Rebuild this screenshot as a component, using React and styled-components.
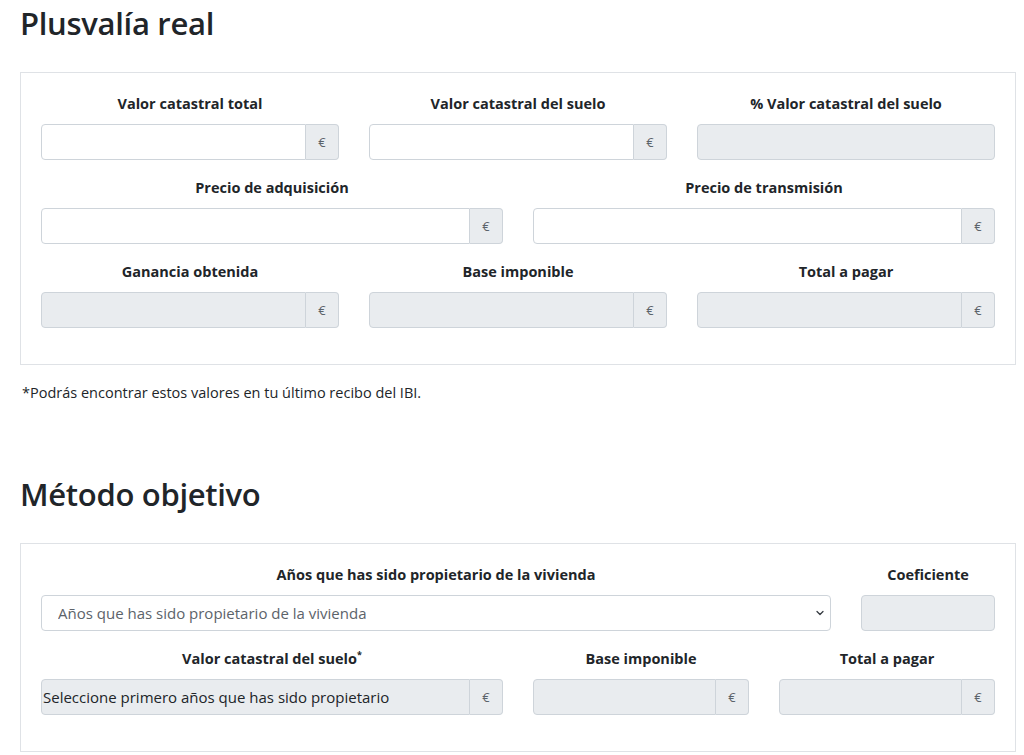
import React from "react";
import styled, { createGlobalStyle } from "styled-components";

const GlobalStyle = createGlobalStyle`
  body {
    margin: 0;
    background: #fff;
    color: #212529;
    font-family: "Open Sans", "Noto Sans", "Liberation Sans", sans-serif;
  }
`;

const Page = styled.div`
  padding: 4px 8px 0 20px;
`;

const Title = styled.h2`
  margin: 0 0 30px 0;
  font-size: 31px;
  line-height: 38px;
  font-weight: 600;
  letter-spacing: -0.3px;
  color: #212529;
  margin-top: ${(p) => p.$top || 0}px;
`;

const Card = styled.div`
  border: 1px solid #dfe2e6;
  padding: 19px 20px 20px;
`;

const Row = styled.div`
  display: grid;
  grid-template-columns: repeat(12, 1fr);
  column-gap: 30px;
  margin-bottom: 16px;
`;

const Field = styled.div`
  grid-column: span ${(p) => p.$span};
  display: flex;
  flex-direction: column;
`;

const Label = styled.label`
  text-align: center;
  font-weight: 700;
  font-size: 14.5px;
  line-height: 24px;
  margin-bottom: 8px;

  sup {
    font-size: 9px;
    line-height: 0;
  }
`;

const Group = styled.div`
  display: flex;
  height: 36px;
`;

const Input = styled.input`
  flex: 1;
  min-width: 0;
  box-sizing: border-box;
  height: 36px;
  margin: 0;
  border: 1px solid #ced4da;
  border-radius: ${(p) => (p.$alone ? "4px" : "4px 0 0 4px")};
  background: ${(p) => (p.disabled ? "#e9ecef" : "#fff")};
  padding: ${(p) => (p.$flush ? "0 1px" : "0 12px")};
  font-family: inherit;
  font-size: 15px;
  color: #212529;
  opacity: 1;
  -webkit-text-fill-color: #212529;
`;

const Addon = styled.span`
  display: flex;
  align-items: center;
  justify-content: center;
  width: 33px;
  box-sizing: border-box;
  background: #e9ecef;
  border: 1px solid #ced4da;
  border-left: none;
  border-radius: 0 4px 4px 0;
  color: #5c636a;
  font-size: 13px;
`;

const SelectWrap = styled.div`
  position: relative;
  height: 36px;

  svg {
    position: absolute;
    right: 6px;
    top: 14px;
    pointer-events: none;
  }
`;

const Select = styled.select`
  appearance: none;
  width: 100%;
  height: 36px;
  box-sizing: border-box;
  border: 1px solid #ced4da;
  border-radius: 4px;
  background: #fff;
  padding: 0 30px 0 16px;
  font-family: inherit;
  font-size: 15px;
  color: #5c636a;
`;

const Note = styled.p`
  margin: 17px 0 0 2px;
  font-size: 14.5px;
  line-height: 21px;
  color: #212529;
`;

const Money = ({ disabled, flush, value }) => (
  <Group>
    <Input disabled={disabled} $flush={flush} value={value} readOnly />
    <Addon>€</Addon>
  </Group>
);

export default function App() {
  return (
    <Page>
      <GlobalStyle />
      <Title>Plusvalía real</Title>
      <Card>
        <Row>
          <Field $span={4}>
            <Label>Valor catastral total</Label>
            <Money />
          </Field>
          <Field $span={4}>
            <Label>Valor catastral del suelo</Label>
            <Money />
          </Field>
          <Field $span={4}>
            <Label>% Valor catastral del suelo</Label>
            <Input $alone disabled value="" readOnly />
          </Field>
        </Row>
        <Row>
          <Field $span={6}>
            <Label>Precio de adquisición</Label>
            <Money />
          </Field>
          <Field $span={6}>
            <Label>Precio de transmisión</Label>
            <Money />
          </Field>
        </Row>
        <Row>
          <Field $span={4}>
            <Label>Ganancia obtenida</Label>
            <Money disabled />
          </Field>
          <Field $span={4}>
            <Label>Base imponible</Label>
            <Money disabled />
          </Field>
          <Field $span={4}>
            <Label>Total a pagar</Label>
            <Money disabled />
          </Field>
        </Row>
      </Card>
      <Note>*Podrás encontrar estos valores en tu último recibo del IBI.</Note>

      <Title $top={72}>Método objetivo</Title>
      <Card>
        <Row>
          <Field $span={10}>
            <Label>Años que has sido propietario de la vivienda</Label>
            <SelectWrap>
              <Select defaultValue="">
                <option value="">Años que has sido propietario de la vivienda</option>
              </Select>
              <svg width="10" height="8" viewBox="0 0 16 16">
                <path
                  d="M2 5l6 6 6-6"
                  fill="none"
                  stroke="#343a40"
                  strokeWidth="2.5"
                  strokeLinecap="round"
                  strokeLinejoin="round"
                />
              </svg>
            </SelectWrap>
          </Field>
          <Field $span={2}>
            <Label>Coeficiente</Label>
            <Input $alone disabled value="" readOnly />
          </Field>
        </Row>
        <Row>
          <Field $span={6}>
            <Label>
              Valor catastral del suelo<sup>*</sup>
            </Label>
            <Money disabled flush value="Seleccione primero años que has sido propietario" />
          </Field>
          <Field $span={3}>
            <Label>Base imponible</Label>
            <Money disabled />
          </Field>
          <Field $span={3}>
            <Label>Total a pagar</Label>
            <Money disabled />
          </Field>
        </Row>
      </Card>
    </Page>
  );
}
